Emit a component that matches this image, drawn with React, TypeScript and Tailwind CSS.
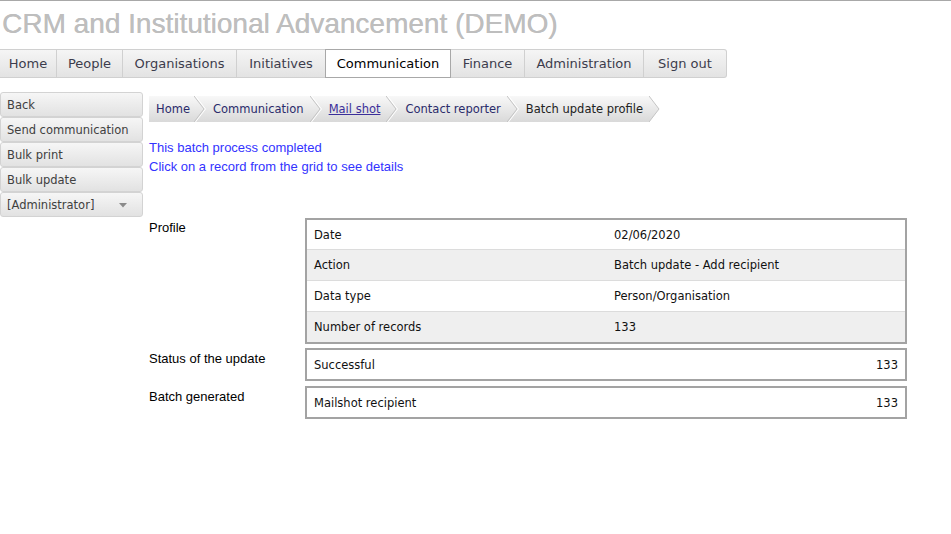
import React from "react";

const verdana = { fontFamily: '"DejaVu Sans", Verdana, sans-serif' };
const arial = { fontFamily: '"Liberation Sans", Arial, sans-serif' };

const tabs: { label: string; w: string; active?: boolean; last?: boolean }[] = [
  { label: "Home", w: "w-[57px]" },
  { label: "People", w: "w-[66px]" },
  { label: "Organisations", w: "w-[114px]" },
  { label: "Initiatives", w: "w-[89px]" },
  { label: "Communication", w: "w-[126px]", active: true },
  { label: "Finance", w: "w-[74px]" },
  { label: "Administration", w: "w-[119px]" },
  { label: "Sign out", w: "w-[83px]", last: true },
];

function Chevron({ last }: { last?: boolean }) {
  return (
    <svg width="12" height="26" viewBox="0 0 12 26" className="block shrink-0">
      <defs>
        <linearGradient id={last ? "bgl" : "bgm"} x1="0" y1="0" x2="0" y2="1">
          <stop offset="0" stopColor="#f8f8f8" />
          <stop offset="1" stopColor="#d9d9d9" />
        </linearGradient>
      </defs>
      {!last && <rect x="0" y="0" width="12" height="26" fill="url(#bgm)" />}
      <polygon points="0,0 10,13 0,26" fill={last ? "url(#bgl)" : "url(#bgm)"} />
      <polyline points="0,0 10,13 0,26" fill="none" stroke="#c4c4c4" strokeWidth="1" />
      {!last && <polyline points="1.5,0 11.5,13 1.5,26" fill="none" stroke="#ffffff" strokeWidth="1" />}
    </svg>
  );
}

const crumbs = [
  { label: "Home" },
  { label: "Communication" },
  { label: "Mail shot", link: true },
  { label: "Contact reporter" },
  { label: "Batch update profile", current: true },
];

const sideItems = ["Back", "Send communication", "Bulk print", "Bulk update"];

const profileRows = [
  ["Date", "02/06/2020"],
  ["Action", "Batch update - Add recipient"],
  ["Data type", "Person/Organisation"],
  ["Number of records", "133"],
];

export default function App() {
  return (
    <div className="min-h-[534px] w-[951px] bg-white border-t border-[#a8a8a8]">
      <div
        className="mt-[7px] pl-[2px] text-[28px] leading-[32px] text-[#bebebe]"
        style={{ ...arial, textShadow: "0.3px 0 0 #bebebe" }}
      >
        CRM and Institutional Advancement (DEMO)
      </div>

      <div className="mt-[9px] flex h-[29px]" style={verdana}>
        {tabs.map((t) => (
          <div
            key={t.label}
            className={
              "flex items-center justify-center border-y border-r text-[13px] " +
              t.w +
              (t.active
                ? " bg-white border-[#a8a8a8] border-l text-black -ml-px"
                : " bg-gradient-to-b from-[#f5f5f5] to-[#e3e3e3] border-[#d0d0d0] text-[#3c3c4c]") +
              (t.last ? " rounded-r-[3px]" : "")
            }
          >
            {t.label}
          </div>
        ))}
      </div>

      <div className="mt-[14px] flex" style={verdana}>
        <div className="flex w-[143px] shrink-0 flex-col">
          {sideItems.map((s) => (
            <div
              key={s}
              className="flex h-[25px] items-center rounded-[3px] border border-[#d3d3d3] bg-gradient-to-b from-[#f6f6f6] to-[#e2e2e2] pl-[6px] pt-[2px] text-[11.5px] text-[#404040]"
            >
              {s}
            </div>
          ))}
          <div className="flex h-[25px] items-center justify-between rounded-[3px] border border-[#d3d3d3] bg-gradient-to-b from-[#f6f6f6] to-[#e2e2e2] pl-[6px] pr-[15px] pt-[2px] text-[11.5px] text-[#404040]">
            <span>[Administrator]</span>
            <svg width="8" height="5" viewBox="0 0 8 5">
              <polygon points="0,0 8,0 4,4.5" fill="#8a8a8a" />
            </svg>
          </div>
        </div>

        <div className="ml-[6px] mt-[4px] flex w-[758px] flex-col">
          <div className="flex h-[26px]">
            {crumbs.map((c, i) => (
              <div key={c.label} className="flex">
                <div
                  className={
                    "flex items-center bg-gradient-to-b from-[#f8f8f8] to-[#d9d9d9] pt-[2px] text-[11.5px] " +
                    (i === 0 ? "pl-[7px] pr-[4px] " : "pl-[7px] pr-[6px] ") +
                    (c.current ? "text-[#222]" : "text-[#2b2b6b]")
                  }
                >
                  <span className={c.link ? "underline text-[#3b2f9a]" : ""}>{c.label}</span>
                </div>
                <Chevron last={i === crumbs.length - 1} />
              </div>
            ))}
          </div>

          <div className="mt-[16px] text-[13px] leading-[19px] text-[#3333ff]" style={arial}>
            <div>This batch process completed</div>
            <div>Click on a record from the grid to see details</div>
          </div>

          <div className="mt-[42px] flex">
            <div className="w-[156px] shrink-0 pt-[1px] text-[13px] leading-[18px] text-black" style={arial}>
              Profile
            </div>
            <div className="w-[602px] border-2 border-[#a3a3a3] text-[11.5px] text-[#111]">
              {profileRows.map((r, i) => (
                <div
                  key={r[0]}
                  className={
                    "flex items-center pt-[2px] " +
                    (i > 0 ? "h-[31px] border-t border-[#dcdcdc] " : "h-[29px] ") +
                    (i % 2 === 1 ? "bg-[#efefef]" : "bg-white")
                  }
                >
                  <div className="w-[307px] pl-[7px]">{r[0]}</div>
                  <div>{r[1]}</div>
                </div>
              ))}
            </div>
          </div>

          <div className="mt-[4px] flex">
            <div className="w-[156px] shrink-0 pt-[2px] text-[13px] leading-[18px] text-black" style={arial}>
              Status of the update
            </div>
            <div className="flex h-[33px] w-[602px] items-center justify-between border-2 border-[#a3a3a3] pl-[7px] pr-[7px] pt-[3px] text-[11.5px] text-[#111]">
              <span>Successful</span>
              <span>133</span>
            </div>
          </div>

          <div className="mt-[5px] flex">
            <div className="w-[156px] shrink-0 pt-[2px] text-[13px] leading-[18px] text-black" style={arial}>
              Batch generated
            </div>
            <div className="flex h-[33px] w-[602px] items-center justify-between border-2 border-[#a3a3a3] pl-[7px] pr-[7px] pt-[3px] text-[11.5px] text-[#111]">
              <span>Mailshot recipient</span>
              <span>133</span>
            </div>
          </div>
        </div>
      </div>
    </div>
  );
}
